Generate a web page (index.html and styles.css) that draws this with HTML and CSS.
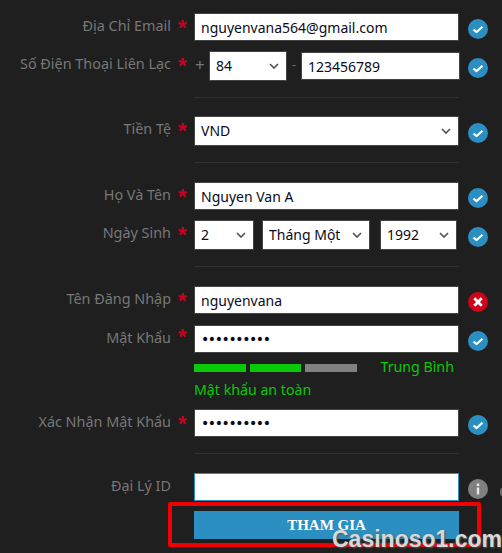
FILE: index.html
```html
<!DOCTYPE html>
<html lang="vi">
<head>
<meta charset="utf-8">
<title>Đăng ký</title>
<link rel="stylesheet" href="styles.css">
</head>
<body>
<svg class="defs" width="0" height="0" aria-hidden="true">
  <symbol id="chev" viewBox="0 0 10 6"><path d="M1 1l4 4 4-4" fill="none" stroke="#555" stroke-width="1.7"/></symbol>
  <symbol id="ok" viewBox="0 0 20 20"><circle cx="10" cy="10" r="10" fill="#2b8fc2"/><path d="M5.5 10.5l3 2.6 6-5.4" fill="none" stroke="#fff" stroke-width="2.2"/></symbol>
  <symbol id="bad" viewBox="0 0 20 20"><circle cx="10" cy="10" r="10" fill="#d0021b"/><path d="M6.3 6.3l7.4 7.4M13.7 6.3l-7.4 7.4" fill="none" stroke="#fff" stroke-width="2.8"/></symbol>
  <symbol id="info" viewBox="0 0 20 20"><circle cx="10" cy="10" r="10" fill="#808080"/><path d="M8.8 4.5h2.4v2.4H8.8zM8.8 8.5h2.4v7H8.8z" fill="#e8e8e8"/></symbol>
</svg>
<main class="form">
  <div class="row">
    <label class="label">Địa Chỉ Email</label><span class="star">*</span>
    <div class="field"><input class="input" value="nguyenvana564@gmail.com"></div>
    <svg class="status"><use href="#ok"/></svg>
  </div>
  <div class="row row-next row-tall">
    <label class="label">Số Điện Thoại Liên Lạc</label><span class="star">*</span>
    <div class="field phone">
      <span class="plus">+</span>
      <div class="sel sel-code"><select class="select"><option>84</option></select><svg class="chev"><use href="#chev"/></svg></div>
      <span class="dash">-</span>
      <input class="input input-phone" value="123456789">
    </div>
    <svg class="status status-low"><use href="#ok"/></svg>
  </div>
  <hr class="rule rule-tight">
  <div class="row row-tall">
    <label class="label">Tiền Tệ</label><span class="star">*</span>
    <div class="field"><div class="sel sel-full"><select class="select"><option>VND</option></select><svg class="chev"><use href="#chev"/></svg></div></div>
    <svg class="status status-low"><use href="#ok"/></svg>
  </div>
  <hr class="rule">
  <div class="row">
    <label class="label">Họ Và Tên</label><span class="star">*</span>
    <div class="field"><input class="input" value="Nguyen Van A"></div>
    <svg class="status"><use href="#ok"/></svg>
  </div>
  <div class="row row-next row-tall">
    <label class="label">Ngày Sinh</label><span class="star">*</span>
    <div class="field dob">
      <div class="sel sel-day"><select class="select"><option>2</option></select><svg class="chev"><use href="#chev"/></svg></div>
      <div class="sel sel-month"><select class="select"><option>Tháng Một</option></select><svg class="chev"><use href="#chev"/></svg></div>
      <div class="sel sel-year"><select class="select"><option>1992</option></select><svg class="chev"><use href="#chev"/></svg></div>
    </div>
    <svg class="status status-low"><use href="#ok"/></svg>
  </div>
  <hr class="rule">
  <div class="row">
    <label class="label">Tên Đăng Nhập</label><span class="star">*</span>
    <div class="field"><input class="input" value="nguyenvana"></div>
    <svg class="status"><use href="#bad"/></svg>
  </div>
  <div class="row row-wide">
    <label class="label">Mật Khẩu</label><span class="star star-high">*</span>
    <div class="field"><input class="input input-secret" type="password" value="abcdefghij"></div>
    <svg class="status"><use href="#ok"/></svg>
  </div>
  <div class="strength">
    <span class="bar bar-on"></span><span class="bar bar-on"></span><span class="bar"></span>
    <span class="level">Trung Bình</span>
  </div>
  <p class="safe">Mật khẩu an toàn</p>
  <div class="row">
    <label class="label">Xác Nhận Mật Khẩu</label><span class="star">*</span>
    <div class="field"><input class="input input-secret" type="password" value="abcdefghij"></div>
    <svg class="status"><use href="#ok"/></svg>
  </div>
  <hr class="rule">
  <div class="row">
    <label class="label">Đại Lý ID</label><span class="star"></span>
    <div class="field"><input class="input input-focus"></div>
    <svg class="status"><use href="#info"/></svg>
  </div>
  <div class="actions"><button class="submit" type="button">THAM GIA</button></div>
</main>
<span class="tip"></span>
<div class="highlight"></div>
<div class="watermark">Casinoso1.com</div>
</body>
</html>
```
FILE: styles.css
```css
* { box-sizing: border-box; }
html, body { margin: 0; height: 100%; }
body {
  background: #1f1f1f;
  font-family: "Noto Sans", sans-serif;
  font-size: 14px;
  position: relative;
  overflow: hidden;
}
.defs { position: absolute; }
.form { padding-top: 13px; width: 502px; }
.row { display: flex; align-items: flex-start; height: 28px; }
.row-tall { height: 30px; }
.row-next { margin-top: 10px; }
.row-wide { margin-top: 11px; }
.label {
  width: 171px;
  flex: none;
  text-align: right;
  color: #777;
  font-size: 14.4px;
  line-height: 26px;
  white-space: nowrap;
}
.star {
  width: 23px;
  flex: none;
  padding-left: 7px;
  color: #c8001f;
  font: bold 22px/30px "Liberation Sans", sans-serif;
}
.star-high { line-height: 24px; }
.field { width: 265px; height: 100%; }
.input, .select {
  display: block;
  width: 100%;
  height: 100%;
  border: 1px solid #444;
  border-radius: 0;
  background: #fff;
  color: #0a0a20;
  font: 14px "Noto Sans", sans-serif;
  padding: 0 6px;
  outline: none;
  margin: 0;
}
.select { padding-bottom: 2px; appearance: none; -webkit-appearance: none; }
.input-secret { font-family: "DejaVu Sans", sans-serif; letter-spacing: -1.4px; }
.input-focus { border-color: #2b8fc2; }
.sel { position: relative; height: 30px; }
.sel-full { width: 100%; }
.chev { position: absolute; right: 8px; top: 12px; width: 10px; height: 6px; }
.status { width: 20px; height: 20px; margin: 6px 0 0 9px; flex: none; }
.status-low { margin-top: 7px; }
.rule { border: 0; border-top: 1px solid #2f2f2f; margin: 16px 0 19px 194px; width: 265px; height: 1px; }
.rule-tight { margin-bottom: 18px; }
.phone { display: flex; align-items: flex-start; }
.plus { width: 15px; flex: none; color: #777; font-size: 17px; line-height: 27px; padding-left: 1px; }
.sel-code { width: 78px; flex: none; }
.dash { width: 14px; flex: none; text-align: center; color: #666; line-height: 28px; }
.input-phone { width: 159px; flex: none; height: 28px; margin-top: 1px; }
.dob { display: flex; }
.sel-day { width: 60px; flex: none; }
.sel-month { width: 108px; flex: none; margin-left: 8px; }
.sel-year { width: 77px; flex: none; margin-left: 10px; }
.strength { display: flex; align-items: center; height: 8px; margin: 11px 0 0 194px; }
.bar { width: 51.5px; height: 8px; background: #808080; margin-right: 4px; }
.bar-on { background: #09c909; }
.level { color: #09c909; font-size: 14.2px; margin-left: 20px; white-space: nowrap; position: relative; top: -2px; }
.safe { color: #09c909; font-size: 14.2px; line-height: 18px; margin: 9px 0 10px 194px; }
.actions { margin: 10px 0 0 194px; }
.submit {
  display: block;
  width: 265px;
  height: 28px;
  background: #2b8fc2;
  border: 0;
  color: #fff;
  font: bold 15px "Liberation Serif", serif;
}
.tip { position: absolute; left: 500px; top: 488px; width: 4px; height: 8px; background: #666; border-radius: 3px; }
.highlight { position: absolute; left: 168px; top: 502px; width: 313px; height: 45px; border: 4px solid #f00000; border-radius: 2px; pointer-events: none; }
.watermark {
  position: absolute;
  left: 332px;
  top: 530px;
  font: bold 23px/18px "Liberation Sans", sans-serif;
  color: #d8d8d8;
  text-shadow: 1px 1px 2px #555;
  white-space: nowrap;
}
```
